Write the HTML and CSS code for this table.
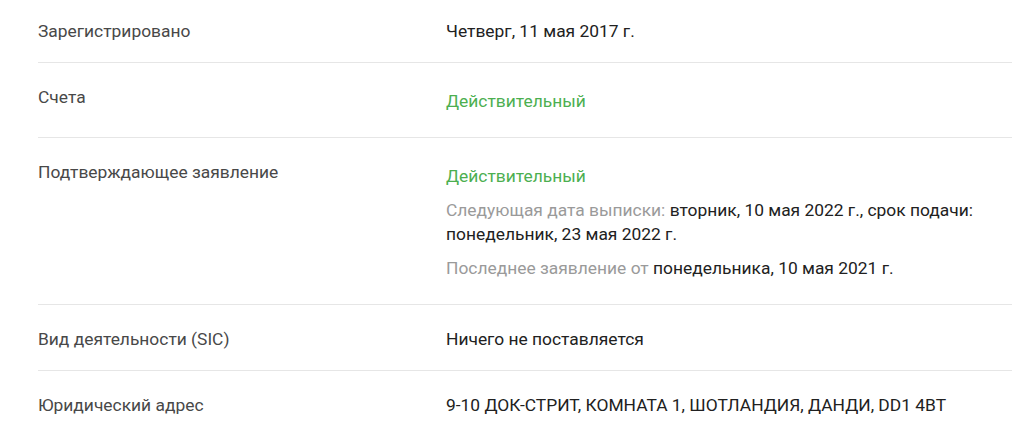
FILE: index.html
```html
<!DOCTYPE html>
<html lang="ru">
<head>
<meta charset="utf-8">
<title>Сведения о компании</title>
<link rel="stylesheet" href="styles.css">
</head>
<body>
<div class="details">
  <div class="row">
    <div class="label">Зарегистрировано</div>
    <div class="value">Четверг, 11 мая 2017 г.</div>
  </div>
  <div class="row">
    <div class="label">Счета</div>
    <div class="value status-block">
      <p class="status">Действительный</p>
    </div>
  </div>
  <div class="row">
    <div class="label">Подтверждающее заявление</div>
    <div class="value status-block">
      <p class="status">Действительный</p>
      <p class="note"><span class="muted">Следующая дата выписки:</span> вторник, 10 мая 2022 г., срок подачи: понедельник, 23 мая 2022 г.</p>
      <p class="note"><span class="muted">Последнее заявление от</span> понедельника, 10 мая 2021 г.</p>
    </div>
  </div>
  <div class="row">
    <div class="label">Вид деятельности (SIC)</div>
    <div class="value">Ничего не поставляется</div>
  </div>
  <div class="row">
    <div class="label">Юридический адрес</div>
    <div class="value">9-10 ДОК-СТРИТ, КОМНАТА 1, ШОТЛАНДИЯ, ДАНДИ, DD1 4BT</div>
  </div>
</div>
</body>
</html>
```

FILE: styles.css
```css
html, body {
  margin: 0;
  padding: 0;
  background: #ffffff;
}

body {
  font-family: Roboto, "Noto Sans", Arial, sans-serif;
  font-size: 17.4px;
  line-height: 24px;
  color: #212121;
}

.details {
  margin-left: 38px;
}

.row {
  display: grid;
  grid-template-columns: 408px 1fr;
  padding: 22px 0 19px;
  border-top: 1px solid #e6e6e6;
}

.row:first-child {
  border-top: none;
  padding-top: 19px;
}

.label {
  color: #484848;
}

.value {
  color: #212121;
}

.status-block {
  display: flex;
  flex-direction: column;
  gap: 10px;
  padding: 4px 0 5px;
}

.status-block p {
  margin: 0;
}

.status {
  color: #4caf50;
}

.muted {
  color: #9a9a9a;
}
```
